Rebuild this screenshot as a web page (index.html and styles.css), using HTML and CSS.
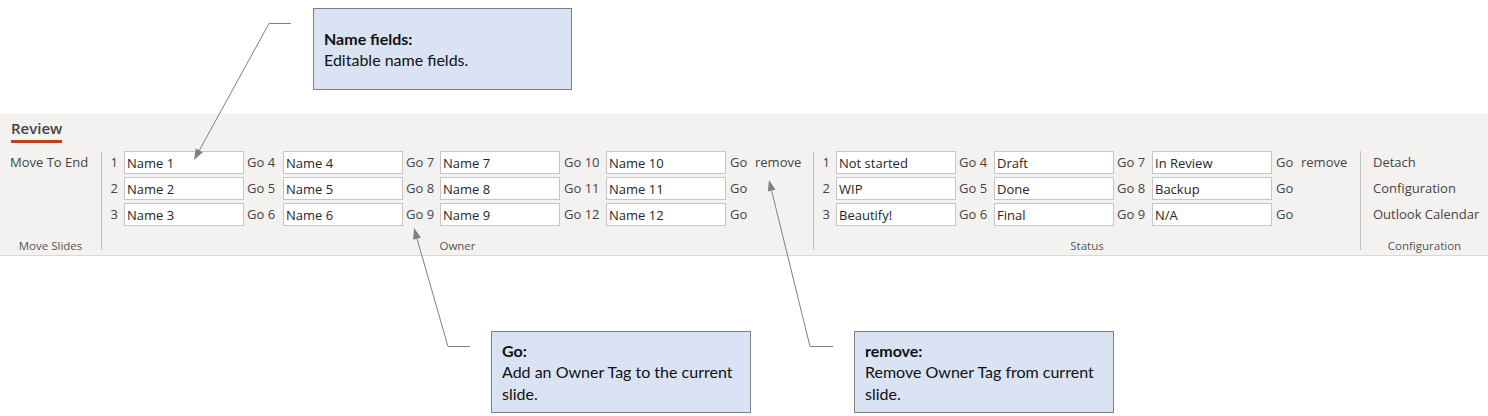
FILE: index.html
```html
<!DOCTYPE html>
<html lang="en">
<head>
<meta charset="utf-8">
<title>Review ribbon</title>
<link rel="stylesheet" href="styles.css">
</head>
<body>
<div class="page">
  <div class="top-space"></div>

  <div class="ribbon">
    <div class="tabs">
      <div class="tab active">Review</div>
    </div>
    <div class="groups">
      <div class="group move">
        <div class="grid move-grid">
          <span class="cmd">Move To End</span>
        </div>
        <div class="group-label">Move Slides</div>
      </div>
      <div class="sep"></div>

      <div class="group owner">
        <div class="grid owner-grid">
          <span class="num">1</span><input class="field" type="text" value="Name 1" readonly>
          <span class="go">Go 4</span><input class="field" type="text" value="Name 4" readonly>
          <span class="go">Go 7</span><input class="field" type="text" value="Name 7" readonly>
          <span class="go wide">Go 10</span><input class="field" type="text" value="Name 10" readonly>
          <span class="go last">Go</span><span class="cmd">remove</span>

          <span class="num">2</span><input class="field" type="text" value="Name 2" readonly>
          <span class="go">Go 5</span><input class="field" type="text" value="Name 5" readonly>
          <span class="go">Go 8</span><input class="field" type="text" value="Name 8" readonly>
          <span class="go wide">Go 11</span><input class="field" type="text" value="Name 11" readonly>
          <span class="go last">Go</span><span></span>

          <span class="num">3</span><input class="field" type="text" value="Name 3" readonly>
          <span class="go">Go 6</span><input class="field" type="text" value="Name 6" readonly>
          <span class="go">Go 9</span><input class="field" type="text" value="Name 9" readonly>
          <span class="go wide">Go 12</span><input class="field" type="text" value="Name 12" readonly>
          <span class="go last">Go</span><span></span>
        </div>
        <div class="group-label">Owner</div>
      </div>
      <div class="sep"></div>

      <div class="group status">
        <div class="grid status-grid">
          <span class="num">1</span><input class="field" type="text" value="Not started" readonly>
          <span class="go">Go 4</span><input class="field" type="text" value="Draft" readonly>
          <span class="go">Go 7</span><input class="field" type="text" value="In Review" readonly>
          <span class="go last">Go</span><span class="cmd">remove</span>

          <span class="num">2</span><input class="field" type="text" value="WIP" readonly>
          <span class="go">Go 5</span><input class="field" type="text" value="Done" readonly>
          <span class="go">Go 8</span><input class="field" type="text" value="Backup" readonly>
          <span class="go last">Go</span><span></span>

          <span class="num">3</span><input class="field" type="text" value="Beautify!" readonly>
          <span class="go">Go 6</span><input class="field" type="text" value="Final" readonly>
          <span class="go">Go 9</span><input class="field" type="text" value="N/A" readonly>
          <span class="go last">Go</span><span></span>
        </div>
        <div class="group-label">Status</div>
      </div>
      <div class="sep"></div>

      <div class="group config">
        <div class="grid config-grid">
          <span class="cmd">Detach</span>
          <span class="cmd">Configuration</span>
          <span class="cmd">Outlook Calendar</span>
        </div>
        <div class="group-label">Configuration</div>
      </div>
    </div>
  </div>

  <div class="callout callout-name">
    <div class="callout-title">Name fields:</div>
    <div>Editable name fields.</div>
  </div>
  <div class="callout callout-go">
    <div class="callout-title">Go:</div>
    <div>Add an Owner Tag to the current slide.</div>
  </div>
  <div class="callout callout-remove">
    <div class="callout-title">remove:</div>
    <div>Remove Owner Tag from current slide.</div>
  </div>

  <svg class="leaders" width="1488" height="416" viewBox="0 0 1488 416" aria-hidden="true">
    <g fill="none" stroke="#808080" stroke-width="1">
      <polyline points="291,23.5 269,23.5 199.3,150.4"/>
      <polyline points="470,346.5 448,346.5 417,238.6"/>
      <polyline points="833,346.5 810,346.5 771.6,190.7"/>
    </g>
    <g fill="#808080">
      <polygon points="194,160 202.8,152.3 195.8,148.4"/>
      <polygon points="414,228 420.9,237.5 413.2,239.7"/>
      <polygon points="769,180 775.5,189.7 767.8,191.6"/>
    </g>
  </svg>
</div>
</body>
</html>
```

FILE: styles.css
```css
html, body {
  margin: 0;
  padding: 0;
  background: #ffffff;
}

.page {
  position: relative;
  width: 1488px;
  height: 416px;
  overflow: hidden;
  font-family: "Open Sans", "Noto Sans", sans-serif;
  font-size: 13px;
  color: #444444;
}

.top-space {
  height: 114px;
}

.ribbon {
  background: #f3f2f1;
}

.tabs {
  display: flex;
  padding-left: 11px;
}

.tab {
  padding-top: 4px;
  padding-bottom: 2px;
  line-height: 20px;
  font-size: 15px;
  font-weight: 600;
  color: #444444;
}

.tab.active {
  border-bottom: 3px solid #c43e1c;
}

.groups {
  display: flex;
  height: 112px;
  border-bottom: 1px solid #d8d8d8;
}

.group {
  display: flex;
  flex-direction: column;
  padding-top: 8px;
}

.sep {
  width: 1px;
  height: 99px;
  margin-top: 8px;
  background: #c2c2c2;
}

.grid {
  display: grid;
  grid-auto-rows: 23px;
  row-gap: 3px;
  align-items: center;
  line-height: 23px;
  white-space: nowrap;
}

.move {
  width: 101px;
}

.move-grid {
  padding-left: 10px;
}

.owner {
  width: 711px;
}

.owner-grid {
  grid-template-columns: 22px 120px 39px 120px 37px 120px 46px 120px 29px 58px;
}

.status {
  width: 546px;
}

.status-grid {
  grid-template-columns: 22px 120px 38px 120px 38px 120px 29px 59px;
}

.config {
  flex: 1;
}

.config-grid {
  padding-left: 12px;
}

.num {
  text-align: right;
  padding-right: 6px;
}

.go {
  padding-left: 3px;
}

.go.wide,
.go.last {
  padding-left: 4px;
}

.field {
  box-sizing: border-box;
  width: 120px;
  height: 23px;
  margin: 0;
  padding: 0 2px;
  border: 1px solid #c6c6c6;
  background: #ffffff;
  font-family: "Open Sans", "Noto Sans", sans-serif;
  font-size: 13px;
  color: #262626;
  outline: none;
}

.group-label {
  margin-top: auto;
  padding-bottom: 1px;
  line-height: 16px;
  text-align: center;
  font-size: 11.5px;
  color: #555555;
}

.callout {
  position: absolute;
  box-sizing: border-box;
  width: 259px;
  height: 82px;
  padding: 0 10px;
  border: 1px solid #7f7f7f;
  background: #dae3f3;
  display: flex;
  flex-direction: column;
  justify-content: center;
  font-family: Lato, "Open Sans", sans-serif;
  font-size: 16px;
  line-height: 21.5px;
  color: #111111;
}

.callout-title {
  font-weight: 700;
}

.callout-name {
  left: 313px;
  top: 8px;
}

.callout-go {
  left: 491px;
  top: 331px;
  width: 260px;
}

.callout-remove {
  left: 854px;
  top: 331px;
  width: 260px;
}

.leaders {
  position: absolute;
  left: 0;
  top: 0;
  pointer-events: none;
}
```
